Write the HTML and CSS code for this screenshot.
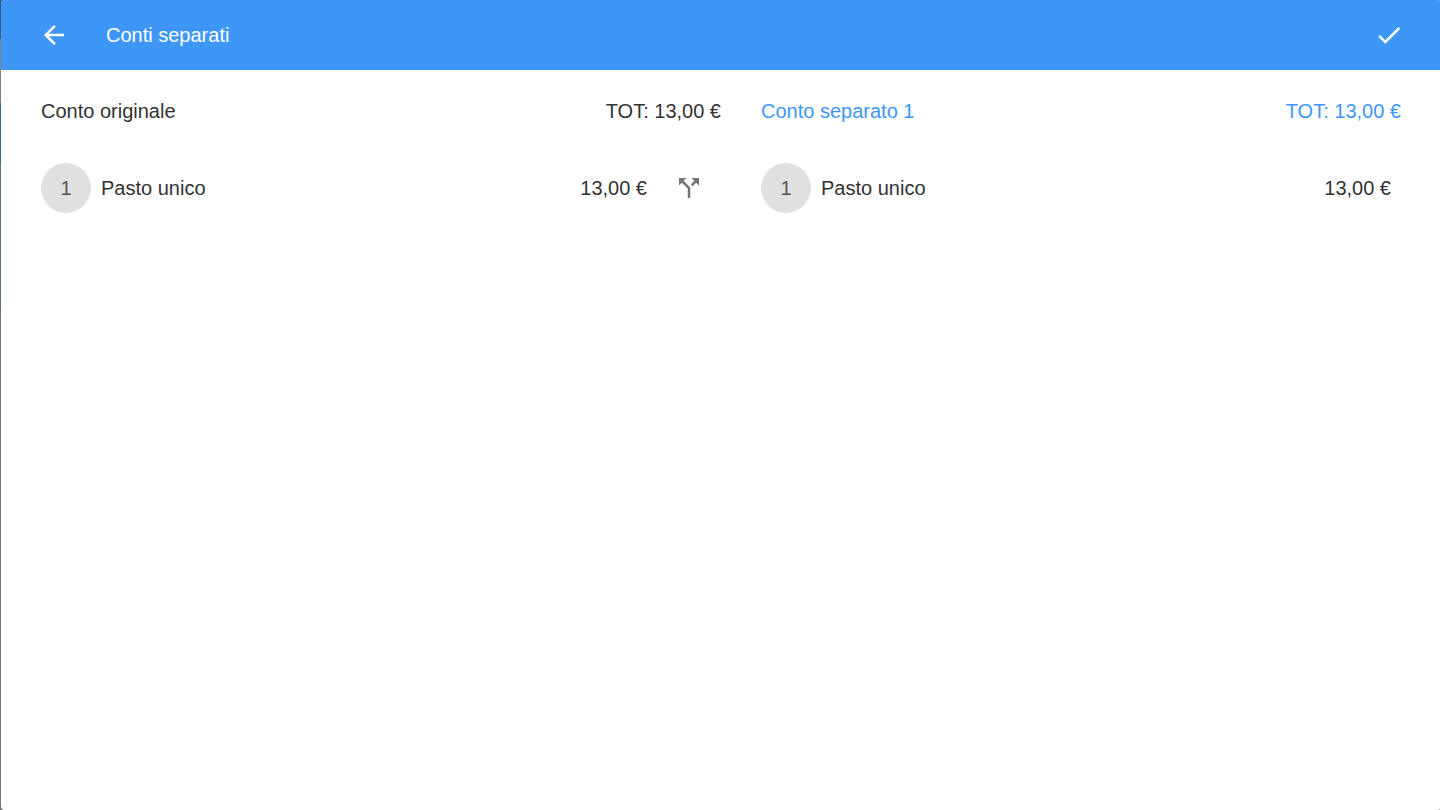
FILE: index.html
```html
<!DOCTYPE html>
<html lang="it">
<head>
    <meta charset="UTF-8">
    <meta name="viewport" content="width=device-width, initial-scale=1.0">
    <title>Conti separati</title>
    <link rel="stylesheet" href="styles.css">
</head>
<body>
    <div class="dialog">
        <header class="toolbar">
            <button class="icon-btn" type="button" aria-label="Indietro">
                <svg class="icon" viewBox="0 0 24 24"><path d="M20 11H7.83l5.59-5.59L12 4l-8 8 8 8 1.41-1.41L7.83 13H20v-2z"/></svg>
            </button>
            <h1 class="toolbar-title">Conti separati</h1>
            <button class="icon-btn" type="button" aria-label="Conferma">
                <svg class="icon" viewBox="0 0 24 24"><path d="M9 16.17L4.83 12l-1.42 1.41L9 19 21 7l-1.41-1.41z"/></svg>
            </button>
        </header>

        <main class="bills">
            <section class="bill">
                <div class="bill-header">
                    <h2>Conto originale</h2>
                    <span>TOT: 13,00 €</span>
                </div>
                <ul class="bill-items">
                    <li class="bill-item">
                        <span class="quantity">1</span>
                        <span class="name">Pasto unico</span>
                        <span class="price">13,00 €</span>
                        <button class="icon-btn split-btn" type="button" aria-label="Dividi">
                            <svg class="icon" viewBox="0 0 24 24"><path d="M14 4l2.29 2.29-2.88 2.88 1.42 1.42 2.88-2.88L20 10V4zm-4 0H4v6l2.29-2.29 4.71 4.7V20h2v-8.41l-5.29-5.3z"/></svg>
                        </button>
                    </li>
                </ul>
            </section>

            <section class="bill bill-active">
                <div class="bill-header">
                    <h2>Conto separato 1</h2>
                    <span>TOT: 13,00 €</span>
                </div>
                <ul class="bill-items">
                    <li class="bill-item">
                        <span class="quantity">1</span>
                        <span class="name">Pasto unico</span>
                        <span class="price">13,00 €</span>
                    </li>
                </ul>
            </section>
        </main>
    </div>
</body>
</html>
```

FILE: styles.css
```css
* {
    margin: 0;
    padding: 0;
    box-sizing: border-box;
}

body {
    font-family: "Liberation Sans", Arial, sans-serif;
    font-size: 20px;
    line-height: 24px;
    color: #333;
    background: linear-gradient(#2f5f8c 39px, #85817f 39px 103px, #2f6a92 103px 163px, #62748a 163px 310px, #777 310px);
    overflow: hidden;
}

h1,
h2 {
    font-size: 20px;
    font-weight: normal;
}

/* the dialog leaves a thin strip of the backdrop on its left */
.dialog {
    min-height: 100vh;
    margin: 0 -1px 0 1px;
    background: #fff;
    border-radius: 4px;
    overflow: hidden;
}

.toolbar {
    display: flex;
    align-items: center;
    height: 70px;
    padding: 0 30px 0 31px;
    background: #3e97f7;
    color: #fff;
}

.toolbar-title {
    flex: 1;
    padding-left: 30px;
}

.icon-btn {
    display: flex;
    align-items: center;
    justify-content: center;
    width: 44px;
    height: 44px;
    border: none;
    background: none;
    color: inherit;
    cursor: pointer;
}

.icon {
    width: 30px;
    height: 30px;
    fill: currentColor;
}

.bills {
    display: grid;
    grid-template-columns: 1fr 1fr;
}

.bill {
    padding-left: 40px;
}

.bill-active {
    padding-right: 40px;
}

.bill-header {
    display: flex;
    align-items: center;
    justify-content: space-between;
    height: 82px;
}

.bill-active .bill-header {
    color: #3e97f7;
}

.bill-items {
    list-style: none;
}

.bill-item {
    display: flex;
    align-items: center;
    gap: 10px;
    height: 72px;
    padding-right: 10px;
}

.quantity {
    width: 50px;
    height: 50px;
    border-radius: 50%;
    background: #e0e0e0;
    color: #555;
    line-height: 50px;
    text-align: center;
}

.name {
    flex: 1;
}

.split-btn {
    margin-left: 10px;
    color: #757575;
}
```
